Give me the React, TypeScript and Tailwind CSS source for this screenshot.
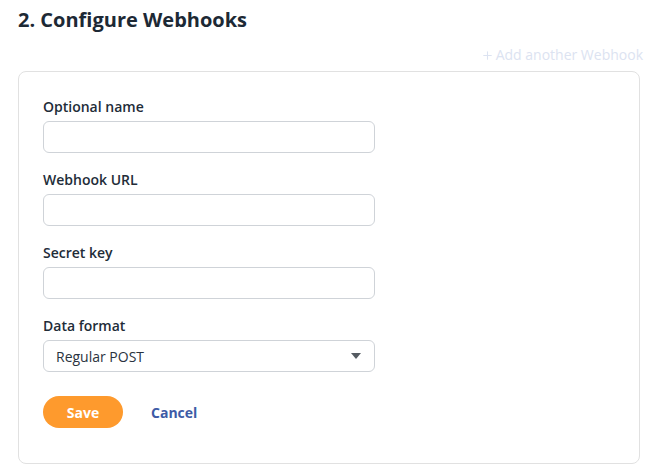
import { Plus } from "lucide-react";

const fields = ["Optional name", "Webhook URL", "Secret key"];

export default function App() {
  return (
    <div
      className="min-h-[467px] bg-white pl-[18px] pr-[11px] pt-[6px] text-[#1f2a37]"
      style={{ fontFamily: '"Open Sans", "Liberation Sans", sans-serif' }}
    >
      <h2 className="text-[20px] leading-[28px] font-bold text-[#1d2935]">
        2. Configure Webhooks
      </h2>

      <div className="mt-[11px] mb-[6px] flex justify-end -mr-[3px]">
        <button className="flex items-center gap-[2px] text-[14px] leading-[20px] text-[#dce3f1]">
          <Plus className="w-[13px] h-[13px]" strokeWidth={2} />
          Add another Webhook
        </button>
      </div>

      <div className="rounded-[8px] border border-[#e1e1e1] px-6 pt-[25px] pb-[35px]">
        <div className="flex flex-col gap-[17px]">
          {fields.map((label) => (
            <div key={label} className="flex flex-col gap-[4px]">
              <label className="text-[14px] leading-[20px] font-semibold text-[#222c38]">
                {label}
              </label>
              <input
                type="text"
                className="w-[332px] h-[32px] rounded-[6px] border border-[#cfd3d8] px-3 text-[14px] outline-none"
              />
            </div>
          ))}

          <div className="flex flex-col gap-[4px]">
            <label className="text-[14px] leading-[20px] font-semibold text-[#222c38]">
              Data format
            </label>
            <div className="relative w-[332px] h-[32px] rounded-[6px] border border-[#cfd3d8] flex items-center pl-[12px] text-[14px] text-[#2a3340]">
              Regular POST
              <svg
                className="absolute right-[13px] top-[12px]"
                width="10"
                height="6"
                viewBox="0 0 10 6"
              >
                <path d="M0 0h10L5 6z" fill="#555b62" />
              </svg>
            </div>
          </div>
        </div>

        <div className="mt-[24px] flex items-center gap-[28px]">
          <button className="w-[80px] h-[32px] rounded-full bg-[#fe9a2d] text-white text-[14px] font-bold">
            Save
          </button>
          <button className="text-[14px] font-bold text-[#3d5ba6]">
            Cancel
          </button>
        </div>
      </div>
    </div>
  );
}
